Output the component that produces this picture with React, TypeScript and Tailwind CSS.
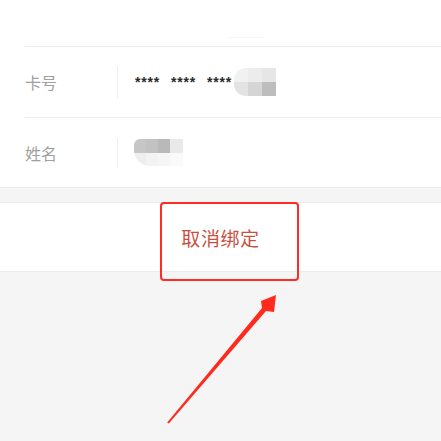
export default function App() {
  const starGroups = ["****", "****", "****"];

  return (
    <div
      className="relative h-[441px] w-[441px] overflow-hidden bg-[#f5f5f5]"
      style={{ fontFamily: '"Noto Sans CJK SC", "Noto Sans", sans-serif' }}
    >
      {/* info card */}
      <div className="border-b border-[#ececec] bg-white">
        <div className="flex h-[46px] items-end">
          <div className="mb-[8px] ml-[228px] h-px w-[37px] bg-[#f6f6f6]" />
        </div>

        <div className="ml-[25px] flex h-[71px] items-center border-t border-[#ececec]">
          <span className="w-[92px] text-[16px] leading-none text-[#a0a0a0]">卡号</span>
          <div className="h-[32px] w-px bg-[#efefef]" />
          <div className="ml-[17px] flex items-center">
            <div className="flex gap-[11px] font-['Liberation_Sans',sans-serif] text-[14px] font-bold tracking-[0.8px] text-[#2a2a2a]">
              {starGroups.map((g, i) => (
                <span key={i}>{g}</span>
              ))}
            </div>
            <div className="ml-[2px] grid grid-cols-3 overflow-hidden rounded-l-[12px]">
              <div className="h-[14px] w-[14px] bg-[#f1f1f1]" />
              <div className="h-[14px] w-[14px] bg-[#ececec]" />
              <div className="h-[14px] w-[14px] bg-[#e6e6e6]" />
              <div className="h-[14px] w-[14px] bg-[#e3e3e3]" />
              <div className="h-[14px] w-[14px] bg-[#d5d5d5]" />
              <div className="h-[14px] w-[14px] bg-[#bdbdbd]" />
            </div>
          </div>
        </div>

        <div className="ml-[25px] flex h-[70px] items-center border-t border-[#ececec]">
          <span className="w-[92px] text-[16px] leading-none text-[#a0a0a0]">姓名</span>
          <div className="h-[30px] w-px bg-[#efefef]" />
          <div className="ml-[16px] grid grid-cols-[12px_12px_12px_13px] overflow-hidden rounded-bl-[16px] rounded-tl-[6px]">
            <div className="h-[14px] bg-[#c6c6c6]" />
            <div className="h-[14px] bg-[#c2c2c2]" />
            <div className="h-[14px] bg-[#b9b9b9]" />
            <div className="h-[14px] bg-[#e9e9e9]" />
            <div className="h-[13px] bg-[#eeeeee]" />
            <div className="h-[13px] bg-[#f3f3f3]" />
            <div className="h-[13px] bg-[#f6f6f6]" />
            <div className="h-[13px] bg-[#fafafa]" />
          </div>
        </div>
      </div>

      <div className="h-[14px]" />

      {/* unbind button */}
      <div className="flex h-[70px] items-center justify-center border-y border-[#ececec] bg-white">
        <span className="text-[19px] leading-none tracking-[0.6px] text-[#c9503f]">取消绑定</span>
      </div>

      {/* annotation box */}
      <div className="absolute left-[160px] top-[202px] h-[79px] w-[139px] rounded-[4px] border-[2.5px] border-[#ff2b24]" />

      {/* annotation arrow */}
      <svg className="absolute left-0 top-0" width="441" height="441" viewBox="0 0 441 441">
        <polygon
          points="276,295 274,312 266,311 168.8,423.6 167.2,422.4 262,308 261,301"
          fill="#ff2a1c"
        />
      </svg>
    </div>
  );
}
